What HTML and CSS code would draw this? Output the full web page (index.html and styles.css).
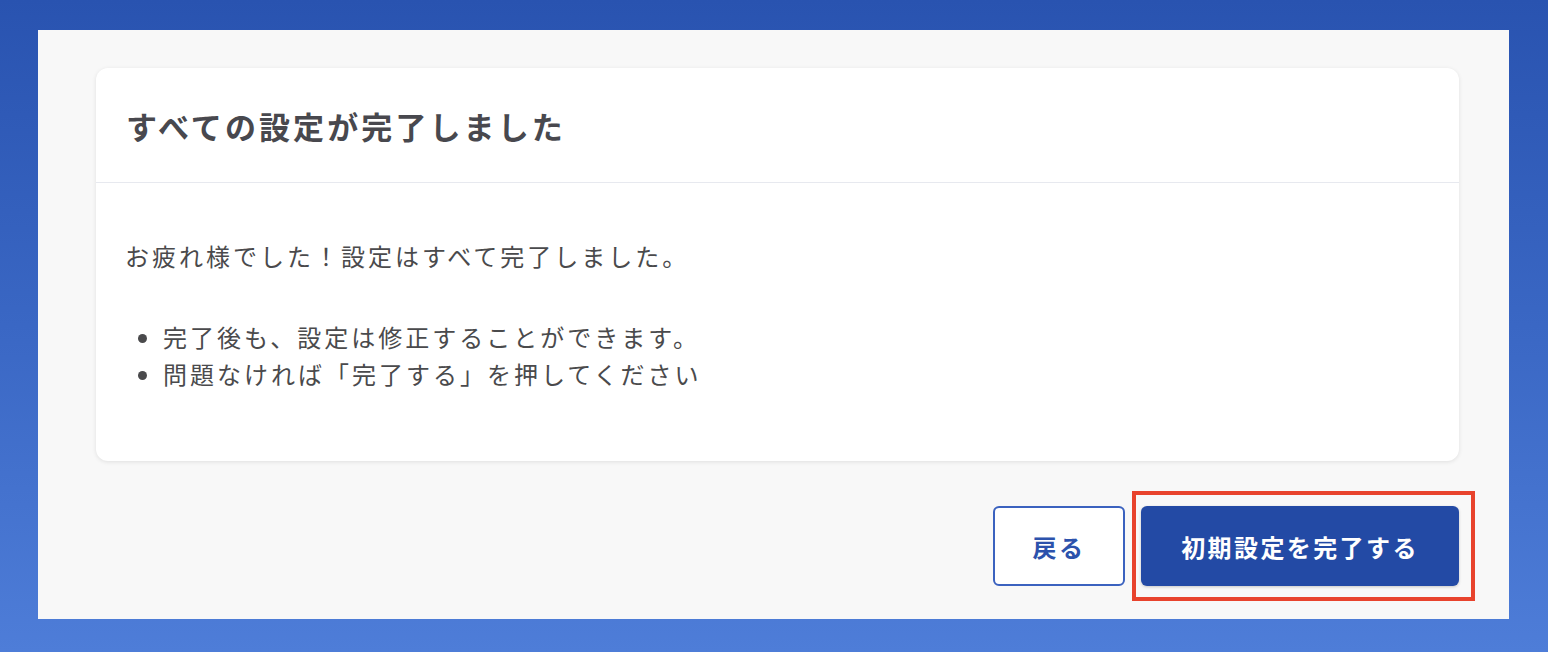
FILE: index.html
```html
<!doctype html>
<html lang="ja">
<head>
    <meta charset="utf-8">
    <meta name="viewport" content="width=device-width, initial-scale=1">
    <title>初期設定</title>
    <link rel="stylesheet" href="styles.css">
</head>

<body>

    <div class="panel">

        <div class="card">
            <div class="card-header">
                <h2 class="card-title">すべての設定が完了しました</h2>
            </div>
            <div class="card-body">
                <p>お疲れ様でした！設定はすべて完了しました。</p>
                <ul>
                    <li>完了後も、設定は修正することができます。</li>
                    <li>問題なければ「完了する」を押してください</li>
                </ul>
            </div>
        </div>

        <div class="actions">
            <button class="btn btn-outline" type="button">戻る</button>
            <span class="highlight">
                <button class="btn btn-primary" type="button">初期設定を完了する</button>
            </span>
        </div>

    </div>

</body>

</html>
```

FILE: styles.css
```css
html {
    width: 100%;
    height: 100%;
}

body {
    margin: 0;
    height: 652px;
    box-sizing: border-box;
    padding: 30px 39px 33px 38px;
    font-family: "Noto Sans CJK JP", "Noto Sans", sans-serif;
    background: linear-gradient(180deg, #2953b0 0%, #3a67c4 50%, #4e7dd8 100%);
    color: #4a4a4c;
}

.panel {
    height: 100%;
    box-sizing: border-box;
    padding: 38px 50px 0 58px;
    background-color: #f8f8f8;
}

.card {
    background-color: #fff;
    border-radius: 12px;
    box-shadow: 0 1px 4px rgba(0, 0, 0, 0.1);
}

.card-header {
    height: 114px;
    display: flex;
    align-items: center;
    padding: 0 30px;
    border-bottom: 1px solid #e7e9ef;
}

.card-title {
    margin: 0;
    font-size: 31px;
    font-weight: 700;
    letter-spacing: 0.1em;
    color: #48484e;
}

.card-body {
    padding: 54px 29px 69px;
    font-size: 24px;
    line-height: 37px;
    letter-spacing: 3px;
}

.card-body p {
    margin: 0 0 44px;
}

.card-body ul {
    margin: 0;
    padding-left: 38px;
}

.actions {
    display: flex;
    justify-content: flex-end;
    gap: 16px;
    margin-top: 45px;
}

.btn {
    height: 80px;
    border-radius: 6px;
    font-family: inherit;
    font-size: 24px;
    font-weight: 700;
    letter-spacing: 0.1em;
    cursor: pointer;
}

.btn-outline {
    width: 132px;
    background-color: #fff;
    border: 2px solid #3b62bf;
    color: #2c52ac;
}

.btn-primary {
    width: 318px;
    background-color: #234aa5;
    border: none;
    color: #fff;
    box-shadow: 0 1px 3px rgba(0, 0, 0, 0.2);
}

.highlight {
    position: relative;
    display: block;
}

.highlight::after {
    content: "";
    position: absolute;
    top: -15px;
    left: -9px;
    right: -16px;
    bottom: -15px;
    border: 4px solid #e8432d;
    pointer-events: none;
}
```
